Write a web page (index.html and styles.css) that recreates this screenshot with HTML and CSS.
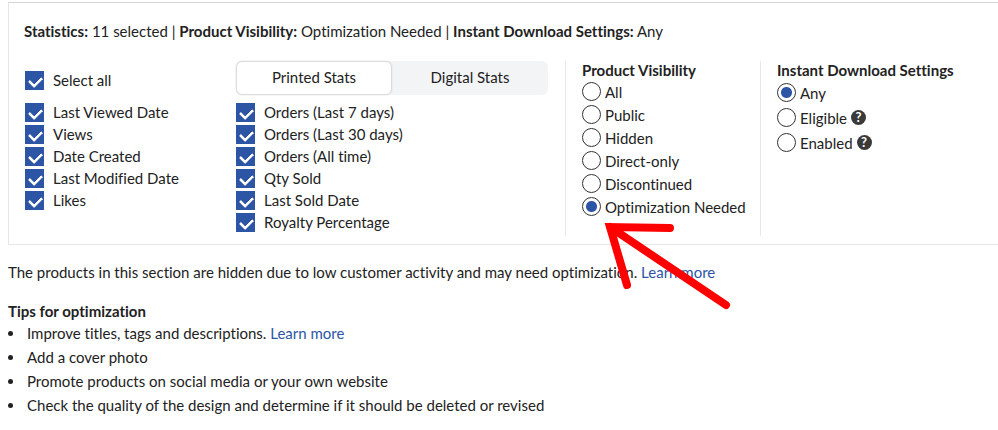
FILE: index.html
```html
<!DOCTYPE html>
<html lang="en">
<head>
  <meta charset="utf-8">
  <title>Product Statistics</title>
  <link rel="stylesheet" href="styles.css">
</head>
<body>

<!-- Filter panel -->
<section class="panel">
  <p class="summary"><b>Statistics:</b> 11 selected | <b>Product Visibility:</b> Optimization Needed | <b>Instant Download Settings:</b> Any</p>

  <div class="filters">
    <div class="stats">
      <div class="general">
        <label class="check select-all"><input type="checkbox" checked>Select all</label>
        <label class="check"><input type="checkbox" checked>Last Viewed Date</label>
        <label class="check"><input type="checkbox" checked>Views</label>
        <label class="check"><input type="checkbox" checked>Date Created</label>
        <label class="check"><input type="checkbox" checked>Last Modified Date</label>
        <label class="check"><input type="checkbox" checked>Likes</label>
      </div>

      <div class="orders">
        <div class="tabs">
          <button type="button" class="tab active">Printed Stats</button>
          <button type="button" class="tab">Digital Stats</button>
        </div>
        <label class="check"><input type="checkbox" checked>Orders (Last 7 days)</label>
        <label class="check"><input type="checkbox" checked>Orders (Last 30 days)</label>
        <label class="check"><input type="checkbox" checked>Orders (All time)</label>
        <label class="check"><input type="checkbox" checked>Qty Sold</label>
        <label class="check"><input type="checkbox" checked>Last Sold Date</label>
        <label class="check"><input type="checkbox" checked>Royalty Percentage</label>
      </div>
    </div>

    <fieldset class="group visibility">
      <legend>Product Visibility</legend>
      <label class="radio"><input type="radio" name="visibility">All</label>
      <label class="radio"><input type="radio" name="visibility">Public</label>
      <label class="radio"><input type="radio" name="visibility">Hidden</label>
      <label class="radio"><input type="radio" name="visibility">Direct-only</label>
      <label class="radio"><input type="radio" name="visibility">Discontinued</label>
      <label class="radio"><input type="radio" name="visibility" checked>Optimization Needed</label>
    </fieldset>

    <fieldset class="group download">
      <legend>Instant Download Settings</legend>
      <label class="radio"><input type="radio" name="download" checked>Any</label>
      <label class="radio"><input type="radio" name="download">Eligible <span class="help">?</span></label>
      <label class="radio"><input type="radio" name="download">Enabled <span class="help">?</span></label>
    </fieldset>
  </div>
</section>

<p class="notice">The products in this section are hidden due to low customer activity and may need optimization. <a href="#">Learn more</a></p>

<h2>Tips for optimization</h2>
<ul class="tips">
  <li>Improve titles, tags and descriptions. <a href="#">Learn more</a></li>
  <li>Add a cover photo</li>
  <li>Promote products on social media or your own website</li>
  <li>Check the quality of the design and determine if it should be deleted or revised</li>
</ul>

<!-- Arrow pointing at the selected option -->
<svg class="arrow" width="130" height="90" viewBox="0 0 130 90" aria-hidden="true">
  <path d="M67 8 L7 7 L24 65 M7 7 L123 85"/>
</svg>

</body>
</html>
```

FILE: styles.css
```css
* {
  box-sizing: border-box;
}

body {
  margin: 0;
  padding: 2px 0 0 8px;
  font-family: Lato, "Liberation Sans", sans-serif;
  font-size: 15px;
  font-variant-ligatures: none;
  line-height: 18px;
  color: #222;
  background: #fff;
}

a {
  color: #2d55a5;
  text-decoration: none;
}

.panel {
  padding: 19px 15px 8px;
  border: 1px solid #e6e6e6;
  border-top-color: #d5d5d5;
  border-right: 0;
}

.summary {
  margin: 0 0 21px;
}

.filters {
  display: grid;
  grid-template-columns: 541px 195px 1fr;
}

.stats {
  display: grid;
  grid-template-columns: 212px 312px;
}

/* Checkboxes */
.check {
  display: flex;
  align-items: center;
  gap: 9px;
  height: 22px;
}

.general .check {
  padding-left: 1px;
}

.select-all {
  margin: 8px 0 10px;
}

.check input {
  appearance: none;
  width: 19px;
  height: 19px;
  margin: 0;
  background: #2d55a5;
}

.check input:checked::before {
  content: "";
  display: block;
  width: 10px;
  height: 6px;
  margin: 5px 0 0 4px;
  border: solid #fff;
  border-width: 0 0 3px 3px;
  border-radius: 1px;
  transform: rotate(-45deg);
}

/* Printed / digital switch */
.tabs {
  display: flex;
  height: 34px;
  margin-bottom: 6px;
  background: #f3f4f6;
  border-radius: 6px;
}

.tab {
  flex: 1;
  padding: 0 0 2px;
  border: 1px solid transparent;
  border-radius: 6px;
  background: none;
  font: inherit;
  color: inherit;
}

.tab.active {
  background: #fff;
  border-color: #dcdcdc;
  box-shadow: 0 0 2px #ddd;
}

/* Radio groups */
.group {
  min-width: 0;
  min-height: 175px;
  margin: 0;
  padding: 0 0 0 16px;
  border: 0;
  border-left: 1px solid #e8e8e8;
}

.group legend {
  float: left;
  width: 100%;
  padding: 0 0 1px;
  font-weight: bold;
}

.radio {
  display: flex;
  clear: both;
  align-items: center;
  gap: 4px;
  height: 23px;
}

.download .radio {
  height: 25px;
}

.radio input {
  appearance: none;
  width: 19px;
  height: 19px;
  margin: 0;
  border: 1px solid #333;
  border-radius: 50%;
}

.radio input:checked {
  background: radial-gradient(circle, #2d55a5 5px, #fff 6px);
}

.help {
  width: 15px;
  height: 15px;
  border-radius: 50%;
  background: #3a3a3a;
  color: #fff;
  font-size: 13px;
  font-weight: bold;
  line-height: 15px;
  text-align: center;
}

/* Optimization notes */
.notice {
  margin: 18px 0 21px;
}

h2 {
  margin: 0 0 1px;
  font-size: 15px;
}

.tips {
  margin: 0;
  padding: 0;
  line-height: 24px;
  list-style: none;
}

.tips li {
  display: flex;
  align-items: center;
  white-space: pre-wrap;
}

.tips li::before {
  content: "";
  width: 5px;
  height: 5px;
  margin-right: 14px;
  border-radius: 50%;
  background: #222;
}

.arrow {
  position: absolute;
  top: 220px;
  left: 603px;
  fill: none;
  stroke: #f00;
  stroke-width: 8px;
  stroke-linecap: round;
}
```
